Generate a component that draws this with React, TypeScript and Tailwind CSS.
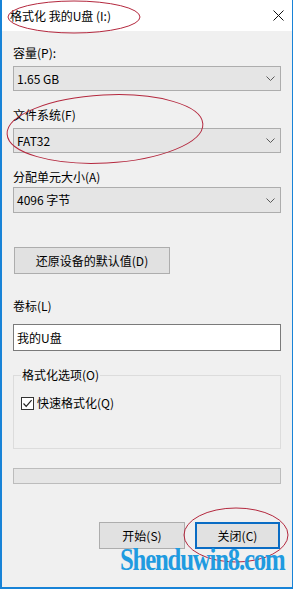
import React from "react";

const font = { fontFamily: '"Noto Sans CJK SC", "Noto Sans", sans-serif' };

function Chevron() {
  return (
    <svg width="9" height="5" viewBox="0 0 9 5" className="shrink-0">
      <path d="M0.5 0.5 L4.5 4.5 L8.5 0.5" fill="none" stroke="#5a5a5a" strokeWidth="1" />
    </svg>
  );
}

function Combo({ value, h }: { value: string; h: string }) {
  return (
    <div className={`${h} flex items-center justify-between bg-[#e5e5e5] border border-[#adadad] pl-[3px] pr-[5px]`}>
      <span className="text-[12px] leading-[16px] text-black">{value}</span>
      <Chevron />
    </div>
  );
}

export default function App() {
  return (
    <div
      className="relative w-[293px] h-[589px] bg-[#f0f0f0] border-l-2 border-r border-b-2 border-[#1883d7] flex flex-col overflow-hidden"
      style={font}
    >
      {/* title bar */}
      <div className="h-[31px] bg-white flex items-center justify-between pl-[8px] pr-[8px] shrink-0">
        <span className="text-[12px] leading-[16px] text-black">格式化 我的U盘 (I:)</span>
        <svg width="11" height="11" viewBox="0 0 11 11">
          <path d="M0.5 0.5 L10.5 10.5 M10.5 0.5 L0.5 10.5" stroke="#111" strokeWidth="1" />
        </svg>
      </div>

      <div className="flex flex-col px-[11px]">
        <div className="mt-[14px] text-[12px] leading-[16px] text-black">容量(P):</div>
        <div className="mt-[5px]">
          <Combo value="1.65 GB" h="h-[25px]" />
        </div>

        <div className="mt-[16px] text-[12px] leading-[16px] text-black">文件系统(F)</div>
        <div className="mt-[5px]">
          <Combo value="FAT32" h="h-[25px]" />
        </div>

        <div className="mt-[16px] text-[12px] leading-[16px] text-black">分配单元大小(A)</div>
        <div className="mt-[2px]">
          <Combo value="4096 字节" h="h-[26px]" />
        </div>

        <div className="mt-[34px] ml-[1px] w-[156px] h-[27px] bg-[#e1e1e1] border border-[#adadad] flex items-center justify-center text-[12px] leading-[16px] text-black">
          还原设备的默认值(D)
        </div>

        <div className="mt-[24px] text-[12px] leading-[16px] text-black">卷标(L)</div>
        <div className="mt-[10px] h-[27px] bg-white border border-[#7a7a7a] flex items-center pl-[3px] text-[12px] leading-[16px] text-black">
          我的U盘
        </div>

        <fieldset className="mt-[16px] h-[82px] border border-[#dcdcdc] px-[7px]">
          <legend className="px-[1px] text-[12px] leading-[16px] text-black">格式化选项(O)</legend>
          <div className="mt-[12px] flex items-center gap-[3px]">
            <div className="w-[13px] h-[13px] bg-white border border-[#333] flex items-center justify-center">
              <svg width="11" height="11" viewBox="0 0 11 11">
                <path d="M1.5 5.5 L4.2 8.3 L9.6 2.2" fill="none" stroke="#222" strokeWidth="1.2" />
              </svg>
            </div>
            <span className="text-[12px] leading-[16px] text-black">快速格式化(Q)</span>
          </div>
        </fieldset>

        <div className="mt-[19px] h-[16px] bg-[#e6e6e6] border border-[#bcbcbc]" />

        <div className="mt-[38px] flex justify-end gap-[10px] mr-[1px]">
          <div className="w-[86px] h-[27px] bg-[#e1e1e1] border border-[#adadad] flex items-center justify-center text-[12px] leading-[16px] text-black">
            开始(S)
          </div>
          <div className="w-[85px] h-[27px] bg-[#e1e1e1] border-2 border-[#0a6cc4] flex items-center justify-center text-[12px] leading-[16px] text-black">
            关闭(C)
          </div>
        </div>
      </div>

      {/* annotation overlay */}
      <svg className="absolute left-[-2px] top-0 pointer-events-none" width="294" height="589" viewBox="0 0 294 589">
        <ellipse cx="74" cy="17" rx="66" ry="16" fill="none" stroke="#b4283e" strokeWidth="1" />
        <ellipse cx="105" cy="129" rx="98" ry="34" fill="none" stroke="#b4283e" strokeWidth="1" transform="rotate(-3 105 129)" />
        <ellipse cx="236" cy="535" rx="52" ry="27" fill="none" stroke="#b4283e" strokeWidth="1" />
      </svg>

      <div
        className="absolute left-[118px] top-[543px] text-[31px] leading-[34px] font-bold text-[#1f9be0] tracking-[-1.5px] origin-left scale-x-[0.8] pointer-events-none whitespace-nowrap"
        style={{ fontFamily: '"Liberation Serif", serif' }}
      >
        Shenduwin8.com
      </div>
    </div>
  );
}
